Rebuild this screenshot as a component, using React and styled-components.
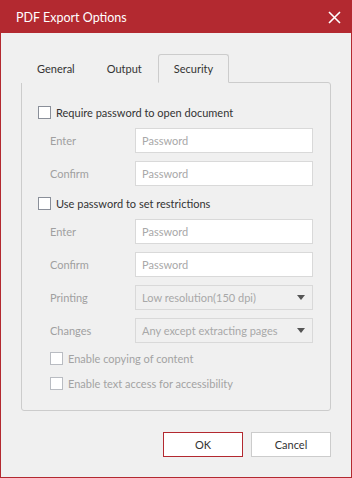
import React, { useState } from "react";
import styled, { createGlobalStyle } from "styled-components";

const GlobalStyle = createGlobalStyle`
  html, body {
    margin: 0;
    padding: 0;
    background: #f0f0f0;
  }
  * {
    box-sizing: border-box;
  }
`;

const tabs = ["General", "Output", "Security"];

export default function App() {
  const [activeTab, setActiveTab] = useState(2);
  const [openPwd, setOpenPwd] = useState(false);
  const [restrictPwd, setRestrictPwd] = useState(false);

  return (
    <>
      <GlobalStyle />
      <Window>
        <TitleBar>
          <Title>PDF Export Options</Title>
          <CloseButton aria-label="Close">
            <svg width="13" height="13" viewBox="0 0 13 13">
              <path
                d="M1 1 L12 12 M12 1 L1 12"
                stroke="#fff"
                strokeWidth="1.6"
                fill="none"
              />
            </svg>
          </CloseButton>
        </TitleBar>

        <Body>
          <TabBar>
            {tabs.map((t, i) => (
              <Tab
                key={t}
                $active={activeTab === i}
                onClick={() => setActiveTab(i)}
              >
                {t}
              </Tab>
            ))}
          </TabBar>

          <Panel>
            <CheckRow>
              <Box checked={openPwd} onClick={() => setOpenPwd(!openPwd)} />
              <CheckText>Require password to open document</CheckText>
            </CheckRow>
            <FieldRow>
              <FieldLabel>Enter</FieldLabel>
              <TextInput type="password" placeholder="Password" />
            </FieldRow>
            <FieldRow>
              <FieldLabel>Confirm</FieldLabel>
              <TextInput type="password" placeholder="Password" />
            </FieldRow>

            <CheckRow>
              <Box
                checked={restrictPwd}
                onClick={() => setRestrictPwd(!restrictPwd)}
              />
              <CheckText>Use password to set restrictions</CheckText>
            </CheckRow>
            <FieldRow>
              <FieldLabel>Enter</FieldLabel>
              <TextInput type="password" placeholder="Password" />
            </FieldRow>
            <FieldRow>
              <FieldLabel>Confirm</FieldLabel>
              <TextInput type="password" placeholder="Password" />
            </FieldRow>
            <FieldRow>
              <FieldLabel>Printing</FieldLabel>
              <Select>
                <span>Low resolution(150 dpi)</span>
                <Caret />
              </Select>
            </FieldRow>
            <FieldRow>
              <FieldLabel>Changes</FieldLabel>
              <Select>
                <span>Any except extracting pages</span>
                <Caret />
              </Select>
            </FieldRow>

            <CheckRow $indent $top={-2}>
              <Box $disabled />
              <CheckText $disabled>Enable copying of content</CheckText>
            </CheckRow>
            <CheckRow $indent>
              <Box $disabled />
              <CheckText $disabled>Enable text access for accessibility</CheckText>
            </CheckRow>
          </Panel>

          <Footer>
            <Button $primary>OK</Button>
            <Button>Cancel</Button>
          </Footer>
        </Body>
      </Window>
    </>
  );
}

function Box({ checked, onClick, $disabled }) {
  return (
    <CheckBox $disabled={$disabled} onClick={onClick}>
      {checked && (
        <svg width="11" height="11" viewBox="0 0 11 11">
          <path d="M2 5.5 L4.5 8 L9 3" stroke="#333" strokeWidth="1.4" fill="none" />
        </svg>
      )}
    </CheckBox>
  );
}

const Window = styled.div`
  width: 352px;
  height: 478px;
  display: flex;
  flex-direction: column;
  border: 1px solid #b32930;
  border-top: none;
  background: #f0f0f0;
  font-family: "Lato", "Noto Sans", sans-serif;
  font-size: 11px;
  color: #333;
`;

const TitleBar = styled.div`
  height: 33px;
  margin: 0 -1px;
  padding: 0 11px 0 16px;
  background: #b32930;
  display: flex;
  align-items: center;
  justify-content: space-between;
`;

const Title = styled.div`
  color: #fff;
  font-size: 12.5px;
  padding-top: 2px;
`;

const CloseButton = styled.button`
  background: none;
  border: none;
  padding: 0;
  width: 13px;
  height: 13px;
  display: flex;
  cursor: pointer;
  margin-top: 2px;
`;

const Body = styled.div`
  flex: 1;
  padding: 21px 20px 0 20px;
  display: flex;
  flex-direction: column;
`;

const TabBar = styled.div`
  display: flex;
  height: 28px;
`;

const Tab = styled.div`
  position: relative;
  z-index: 1;
  height: 29px;
  padding: 0 15px;
  display: flex;
  align-items: center;
  color: #333;
  cursor: pointer;
  border: 1px solid ${(p) => (p.$active ? "#cccccc" : "transparent")};
  border-bottom: 1px solid ${(p) => (p.$active ? "#f0f0f0" : "transparent")};
  border-radius: 3px 3px 0 0;
  background: #f0f0f0;
`;

const Panel = styled.div`
  height: 329px;
  border: 1px solid #cccccc;
  border-radius: 0 3px 3px 3px;
  padding: 20px 17px 0 16px;
  display: flex;
  flex-direction: column;
`;

const CheckRow = styled.div`
  display: flex;
  align-items: center;
  height: 18px;
  margin-top: ${(p) => (p.$top ? `${p.$top}px` : "0")};
  margin-bottom: 7px;
  padding-left: ${(p) => (p.$indent ? "12px" : "0")};
`;

const CheckBox = styled.span`
  width: 13px;
  height: 13px;
  flex-shrink: 0;
  border: 1px solid ${(p) => (p.$disabled ? "#b9bcc2" : "#8a8f99")};
  background: #fff;
  display: flex;
  align-items: center;
  justify-content: center;
  cursor: ${(p) => (p.$disabled ? "default" : "pointer")};
`;

const CheckText = styled.span`
  margin-left: 5px;
  color: ${(p) => (p.$disabled ? "#a3a3a3" : "#333")};
  white-space: nowrap;
`;

const FieldRow = styled.div`
  display: flex;
  align-items: center;
  height: 25px;
  margin-bottom: 8px;
  padding-left: 12px;
`;

const FieldLabel = styled.span`
  width: 85px;
  color: #a0a0a0;
`;

const TextInput = styled.input`
  width: 178px;
  height: 25px;
  border: 1px solid #d9d9d9;
  background: #fff;
  padding: 0 6px;
  font-family: inherit;
  font-size: 11px;
  color: #333;
  outline: none;
  &::placeholder {
    color: #a8a8a8;
  }
`;

const Select = styled.div`
  width: 178px;
  height: 25px;
  border: 1px solid #d9d9d9;
  background: #f0f0f0;
  padding: 0 7px 0 6px;
  display: flex;
  align-items: center;
  justify-content: space-between;
  color: #a8a8a8;
  white-space: nowrap;
`;

const Caret = styled.span`
  width: 0;
  height: 0;
  border-left: 4px solid transparent;
  border-right: 4px solid transparent;
  border-top: 5px solid #555;
`;

const Footer = styled.div`
  display: flex;
  justify-content: flex-end;
  gap: 8px;
  margin-top: 21px;
  padding-right: 0;
`;

const Button = styled.button`
  width: 80px;
  height: 25px;
  background: #fff;
  border: 1px solid ${(p) => (p.$primary ? "#b32930" : "#cccccc")};
  font-family: inherit;
  font-size: 11px;
  color: #333;
  cursor: pointer;
`;
